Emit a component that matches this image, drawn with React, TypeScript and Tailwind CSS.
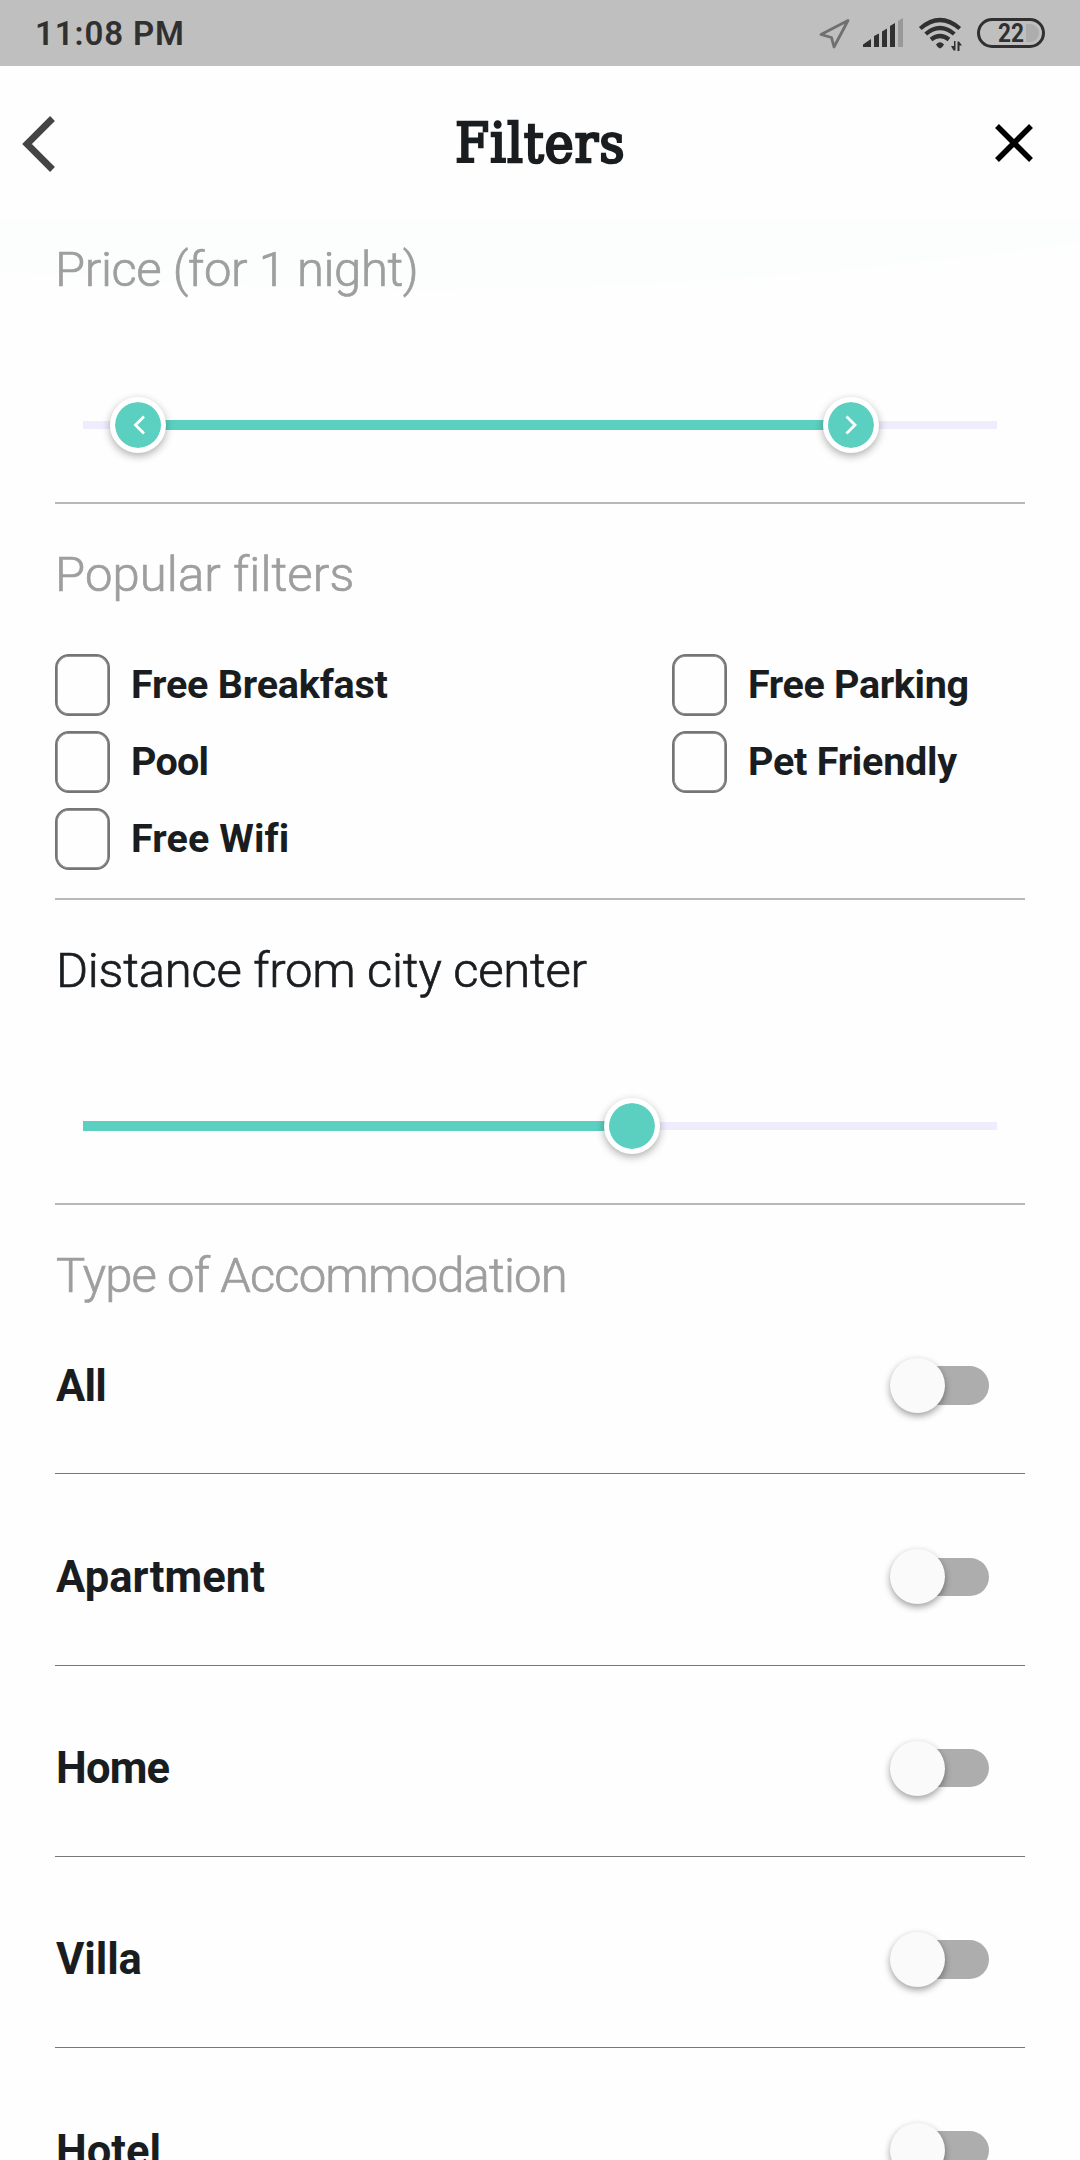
import type { ReactNode } from "react";

const popularFilters = [
  { label: "Free Breakfast", spacing: "tracking-[-0.2px]" },
  { label: "Free Parking", spacing: "tracking-[-0.35px]" },
  { label: "Pool", spacing: "tracking-[-0.8px]" },
  { label: "Pet Friendly", spacing: "tracking-[-0.25px]" },
  { label: "Free Wifi", spacing: "tracking-[0.1px]" },
];

const accommodationTypes = [
  { label: "All", spacing: "tracking-[-0.7px]" },
  { label: "Apartment", spacing: "tracking-[0.1px]" },
  { label: "Home", spacing: "tracking-[-0.8px]" },
  { label: "Villa", spacing: "tracking-[-0.1px]" },
  { label: "Hotel", spacing: "tracking-[0px]" },
];

function StatusBar() {
  return (
    <div className="flex h-[66px] items-center justify-between bg-[#bfbfbf] pl-[35px] text-[#303030]">
      <span className="pt-[2px] text-[33px] leading-[66px] font-semibold tracking-[0.9px]">11:08 PM</span>
      <svg width="280" height="66" viewBox="800 0 280 66" fill="none">
        <path d="M848 20.500 821 34.500 831.500 37.500 834 47 Z" stroke="#707070" strokeWidth="2.800" strokeLinejoin="round" />
        <g fill="#303030">
          <path d="M863 47V44.500L871 39V47Z" />
          <path d="M874 47V36L879 33.500V47Z" />
          <path d="M882 47V31.500L887 28.500V47Z" />
          <path d="M890 47V26L895 23V47Z" />
          <path d="M898 47V21L903 18V47Z" fill="#999999" />
        </g>
        <g stroke="#303030" strokeWidth="4.200">
          <path d="M920.300 28.500Q940 11.500 959.700 28.500" />
          <path d="M925.700 34Q940 22 954.300 34" />
          <path d="M931 39.500Q940 32.500 949 39.500" />
        </g>
        <path d="M936 44.500Q940 40 944 44.500Q943 47 940 48.500Q937 47 936 44.500Z" fill="#303030" />
        <path d="M955.500 41V50.500H953.500L951 46H954V41ZM957.500 51V41.500H959L962 45.500H959.500V51Z" fill="#303030" />
        <rect x="978.500" y="19.500" width="65" height="27" rx="13.500" stroke="#303030" strokeWidth="3" />
        <path d="M1026 24H1030A9 9 0 0 1 1030 42H1026Z" fill="#adadad" />
        <text x="998" y="41.800" fill="#303030" fontSize="25" fontWeight="700" textLength="26" lengthAdjust="spacingAndGlyphs">22</text>
      </svg>
    </div>
  );
}

function Header() {
  return (
    <header className="grid h-[154px] grid-cols-[1fr_auto_1fr] items-start bg-[#fefefe] px-[22px] pt-[50px]">
      <svg width="34" height="56" viewBox="0 0 34 56" fill="none">
        <path d="M30.500 2.500 5 28 30.500 53.500" stroke="#444444" strokeWidth="6.800" />
      </svg>
      <h1 className="pl-px font-['DejaVu_Serif_Condensed','DejaVu_Serif',serif] text-[54px] leading-[56px] font-normal tracking-[1.3px] text-[#1a1d20] [-webkit-text-stroke:2.6px_#1a1d20]">
        Filters
      </h1>
      <svg className="mt-[7px] mr-[24px] justify-self-end" width="40" height="40" viewBox="0 0 40 40" fill="none">
        <path d="M3 3 37 37M37 3 3 37" stroke="#000000" strokeWidth="5.500" />
      </svg>
    </header>
  );
}

function SectionTitle({ children, className }: { children: ReactNode; className: string }) {
  return (
    <h2
      className={`pt-px text-[49px] leading-[59px] font-light whitespace-nowrap [-webkit-text-stroke:0.7px_currentColor] ${className}`}
    >
      {children}
    </h2>
  );
}

function Thumb({ className, children }: { className: string; children?: ReactNode }) {
  return (
    <div
      className={`absolute top-0 flex size-[56px] items-center justify-center rounded-full border-[5px] border-white bg-[#5bd0c1] bg-clip-padding shadow-[0_3px_9px_rgba(0,0,0,0.32)] ${className}`}
    >
      {children}
    </div>
  );
}

function Slider({ children, range }: { children: ReactNode; range: string }) {
  return (
    <div className="relative mx-[28px] flex h-[56px] items-center">
      <div className="h-[8px] w-full bg-[#efedfd]" />
      <div className={`absolute top-[23px] h-[9.5px] bg-[#5bd0c1] ${range}`} />
      {children}
    </div>
  );
}

function Divider({ className }: { className: string }) {
  return <div className={`h-[2px] bg-[#b8b8b8] ${className}`} />;
}

function Switch() {
  return (
    <div className="relative mr-[36px] flex h-[55px] w-[99px] items-center justify-end">
      <div className="h-[38.5px] w-[80px] rounded-full bg-[#adadad]" />
      <div className="absolute top-0 left-0 size-[55px] rounded-full bg-[#fafafa] shadow-[0_3px_7px_rgba(0,0,0,0.38)]" />
    </div>
  );
}

export default function App() {
  return (
    <div className="h-[2160px] w-[1080px] overflow-hidden bg-[#fefefe] font-[Roboto,sans-serif] antialiased">
      <StatusBar />
      <Header />
      <main className="relative px-[55px]">
        <svg className="absolute top-0 left-0" width="1080" height="80" viewBox="0 0 1080 80">
          <path d="M0 0H1080V23Q760 68 440 70Q200 70 0 51Z" fill="#fcfefe" />
        </svg>
        <section className="relative pt-[19px]">
          <SectionTitle className="tracking-[-0.4px] text-[#9e9e9e]">Price (for 1 night)</SectionTitle>
          <div className="pt-[98px]">
            <Slider range="left-[55px] w-[713px]">
              <Thumb className="left-[27px]">
                <svg width="46" height="46" viewBox="0 0 46 46" fill="none" className="shrink-0">
                  <path d="M29 14.500 20.500 23 29 31.500" stroke="white" strokeWidth="2.800" />
                </svg>
              </Thumb>
              <Thumb className="left-[740px]">
                <svg width="46" height="46" viewBox="0 0 46 46" fill="none" className="shrink-0">
                  <path d="M18.500 14.500 27 23 18.500 31.500" stroke="white" strokeWidth="2.800" />
                </svg>
              </Thumb>
            </Slider>
          </div>
          <Divider className="mt-[49px]" />
        </section>

        <section className="pt-[40px]">
          <SectionTitle className="tracking-[0.1px] text-[#9e9e9e]">Popular filters</SectionTitle>
          <div className="mt-[49.5px] grid grid-cols-[617px_1fr] gap-y-[15px]">
            {popularFilters.map(({ label, spacing }) => (
              <label key={label} className="flex h-[62px] items-center gap-[21px]">
                <span className="h-[62px] w-[55px] shrink-0 rounded-[14px] border-2 border-[#757575] shadow-[inset_0_0_0_0.7px_#757575]" />
                <span className={`text-[39.5px] leading-[62px] font-bold whitespace-nowrap text-[#1a1d20] ${spacing}`}>
                  {label}
                </span>
              </label>
            ))}
          </div>
          <Divider className="mt-[28.5px]" />
        </section>

        <section className="pt-[40px]">
          <SectionTitle className="pl-px tracking-[-0.25px] text-[#1a1d20]">Distance from city center</SectionTitle>
          <div className="pt-[98px]">
            <Slider range="left-0 w-[549px]">
              <Thumb className="left-[520.5px]" />
            </Slider>
          </div>
          <Divider className="mt-[49px]" />
        </section>

        <section className="pt-[40px]">
          <div className="h-[38px]">
            <SectionTitle className="pl-px tracking-[-0.85px] text-[#9e9e9e]">Type of Accommodation</SectionTitle>
          </div>
          {accommodationTypes.map(({ label, spacing }) => (
            <div
              key={label}
              className="mt-[15px] flex h-[176.25px] items-center justify-between border-b border-[#777777]"
            >
              <span className={`pt-[2px] pl-px text-[43.5px] leading-[56px] font-bold text-[#1a1d20] ${spacing}`}>
                {label}
              </span>
              <Switch />
            </div>
          ))}
        </section>
      </main>
    </div>
  );
}
